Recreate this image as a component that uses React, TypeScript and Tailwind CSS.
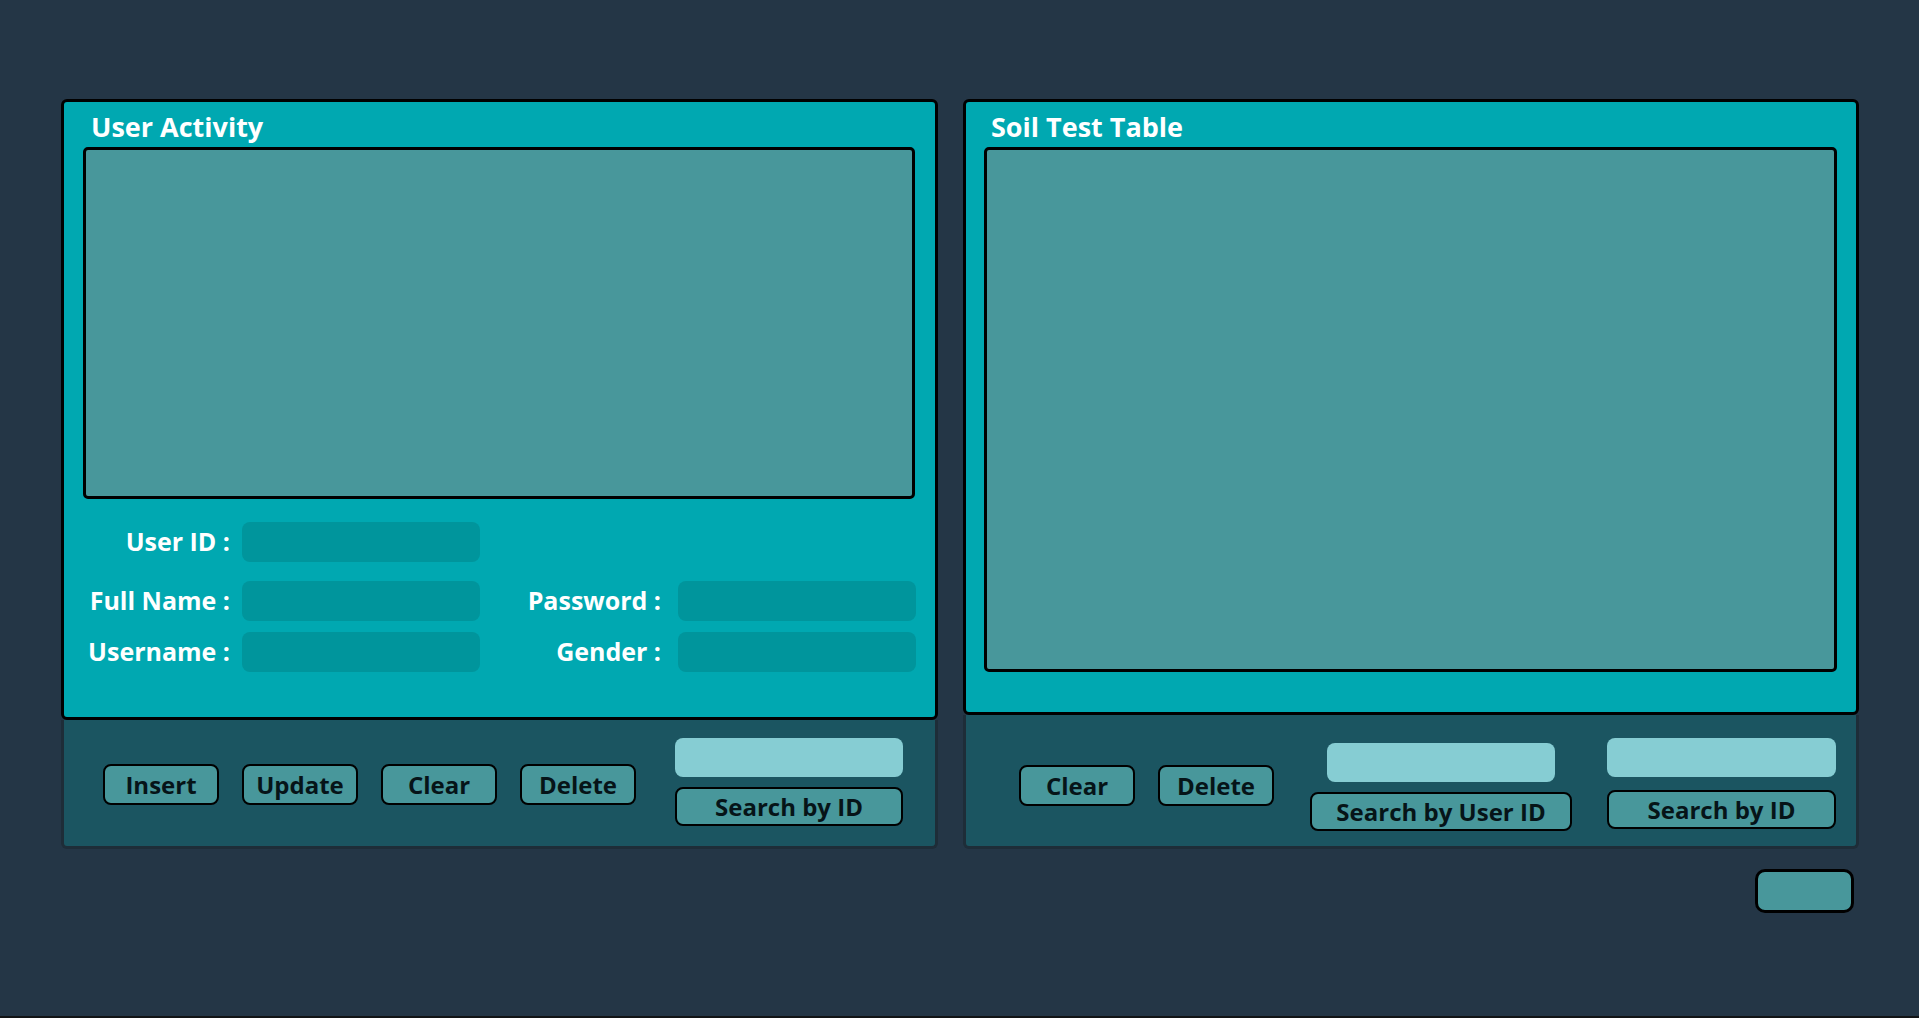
import React from 'react';

const btn =
    'h-[41px] w-[116px] rounded-[8px] border-[2.5px] border-black bg-[#48979b] text-[24px] font-bold leading-none text-[#061418]';

const field = 'h-[40px] w-[238px] rounded-[8px] bg-[#00959c]';

const searchField = 'h-[39px] rounded-[8px] bg-[#86cdd3]';

const searchBtn =
    'h-[39px] rounded-[8px] border-[2.5px] border-black bg-[#48979b] text-[24px] font-bold leading-none text-[#061418]';

const FormRow: React.FC<{ left: string; right?: string; className?: string }> = ({ left, right, className }) => (
    <div className={`flex items-center ${className ?? ''}`}>
        <label className="w-[166px] text-right text-[25px] font-bold text-white">{left}</label>
        <div className={`ml-[12px] ${field}`} />
        {right && (
            <>
                <label className="w-[181px] text-right text-[25px] font-bold text-white">{right}</label>
                <div className={`ml-[17px] ${field}`} />
            </>
        )}
    </div>
);

const App: React.FC = () => {
    return (
        <div className="h-[1018px] w-full border-b-2 border-[#121416] bg-[#243646] pl-[61px] pt-[99px] font-['Open_Sans',sans-serif]">
            <div className="flex gap-[25px]">
                {/* User activity panel */}
                <div className="flex w-[877px] flex-col">
                    <div className="h-[621px] rounded-[6px] border-[3px] border-black bg-[#00a8b1]">
                        <h2 className="pl-[27px] pt-[6px] text-[27px] font-bold leading-[37px] text-white">User Activity</h2>
                        <div className="ml-[19px] mr-[20px] mt-[2px] h-[352px] rounded-[5px] border-[3px] border-black bg-[#48979b]" />
                        <FormRow left="User ID :" className="mt-[23px]" />
                        <FormRow left="Full Name :" right="Password :" className="mt-[19px]" />
                        <FormRow left="Username :" right="Gender :" className="mt-[11px]" />
                    </div>
                    <div className="flex h-[129px] items-start rounded-b-[6px] border-x-[3px] border-b-[3px] border-[#1e2d38] bg-[#1b5561] pl-[39px]">
                        <div className="mt-[44px] flex gap-[23px]">
                            <button className={btn}>Insert</button>
                            <button className={btn}>Update</button>
                            <button className={btn}>Clear</button>
                            <button className={btn}>Delete</button>
                        </div>
                        <div className="ml-[39px] mt-[18px] flex w-[228px] flex-col gap-[10px]">
                            <div className={searchField} />
                            <button className={searchBtn}>Search by ID</button>
                        </div>
                    </div>
                </div>

                {/* Soil test panel */}
                <div className="flex w-[896px] flex-col">
                    <div className="h-[616px] rounded-[6px] border-[3px] border-black bg-[#00a8b1]">
                        <h2 className="pl-[25px] pt-[6px] text-[27px] font-bold leading-[37px] text-white">Soil Test Table</h2>
                        <div className="ml-[18px] mr-[19px] mt-[2px] h-[525px] rounded-[5px] border-[3px] border-black bg-[#48979b]" />
                    </div>
                    <div className="flex h-[134px] items-start rounded-b-[6px] border-x-[3px] border-b-[3px] border-[#1e2d38] bg-[#1b5561] pl-[53px]">
                        <div className="mt-[50px] flex gap-[23px]">
                            <button className={btn}>Clear</button>
                            <button className={btn}>Delete</button>
                        </div>
                        <div className="ml-[36px] mt-[28px] flex w-[262px] flex-col items-center gap-[10px]">
                            <div className={`w-[228px] ${searchField}`} />
                            <button className={`w-full ${searchBtn}`}>Search by User ID</button>
                        </div>
                        <div className="ml-[35px] mt-[23px] flex w-[229px] flex-col gap-[13px]">
                            <div className={searchField} />
                            <button className={searchBtn}>Search by ID</button>
                        </div>
                    </div>
                </div>
            </div>
            <div className="flex w-[1798px] justify-end pr-[5px] pt-[20px]">
                <button className="h-[44px] w-[99px] rounded-[10px] border-[3px] border-black bg-[#48979b]" />
            </div>
        </div>
    );
};

export default App;
